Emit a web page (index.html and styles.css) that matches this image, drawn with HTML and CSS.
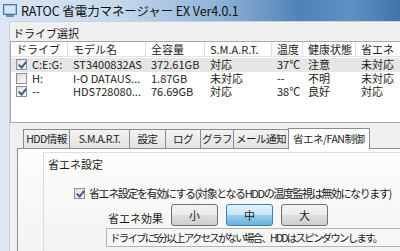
FILE: index.html
```html
<!DOCTYPE html>
<html lang="ja">
<head>
<meta charset="utf-8">
<link rel="stylesheet" href="styles.css">
</head>
<body>
<div class="titlebar">
  <svg class="appicon" width="14" height="13" viewBox="0 0 14 13">
    <rect x="0.5" y="0.5" width="13" height="10" fill="#9fc3e6" stroke="#4a78a8"/>
    <rect x="2" y="2" width="10" height="7" fill="#d6e8f8"/>
    <rect x="3" y="11" width="8" height="2" fill="#6d8fb3"/>
  </svg>
  <span class="title">RATOC 省電力マネージャー EX Ver4.0.1</span>
</div>
<div class="frame">
  <div class="client">
    <div class="section-label">ドライブ選択</div>
    <div class="listview">
      <div class="lv-row lv-head">
        <div class="c c1">ドライブ</div>
        <div class="c c2">モデル名</div>
        <div class="c c3">全容量</div>
        <div class="c c4">S.M.A.R.T.</div>
        <div class="c c5">温度</div>
        <div class="c c6">健康状態</div>
        <div class="c c7">省エネ</div>
      </div>
      <div class="lv-row sel">
        <div class="c c1"><span class="cb checked"></span>C:E:G:</div>
        <div class="c c2">ST3400832AS</div>
        <div class="c c3">372.61GB</div>
        <div class="c c4">対応</div>
        <div class="c c5">37℃</div>
        <div class="c c6">注意</div>
        <div class="c c7">未対応</div>
      </div>
      <div class="lv-row">
        <div class="c c1"><span class="cb"></span>H:</div>
        <div class="c c2">I-O DATAUS...</div>
        <div class="c c3">1.87GB</div>
        <div class="c c4">未対応</div>
        <div class="c c5">--</div>
        <div class="c c6">不明</div>
        <div class="c c7">未対応</div>
      </div>
      <div class="lv-row">
        <div class="c c1"><span class="cb checked"></span>--</div>
        <div class="c c2">HDS728080...</div>
        <div class="c c3">76.69GB</div>
        <div class="c c4">対応</div>
        <div class="c c5">38℃</div>
        <div class="c c6">良好</div>
        <div class="c c7">対応</div>
      </div>
    </div>
    <div class="tabs">
      <div class="tab t1">HDD情報</div>
      <div class="tab t2">S.M.A.R.T.</div>
      <div class="tab t3">設定</div>
      <div class="tab t4">ログ</div>
      <div class="tab t5">グラフ</div>
      <div class="tab t6">メール通知</div>
      <div class="tab active">省エネ/FAN制御</div>
    </div>
    <div class="panel">
      <div class="group">
        <div class="group-title">省エネ設定</div>
        <div class="check-line"><span class="cb checked"></span>省エネ設定を有効にする(対象となるHDDの温度監視は無効になります)</div>
        <div class="effect-row">
          <span class="effect-label">省エネ効果</span>
          <div class="btn">小</div>
          <div class="btn on">中</div>
          <div class="btn">大</div>
        </div>
        <div class="desc">ドライブに5分以上アクセスがない場合、HDDはスピンダウンします。</div>
      </div>
    </div>
  </div>
</div>
</body>
</html>
```

FILE: styles.css
```css
* { box-sizing: border-box; }
html, body {
  margin: 0;
  padding: 0;
}
body {
  width: 400px;
  height: 251px;
  overflow: hidden;
  background: #dfe8f2;
  font-family: "Noto Sans CJK JP", "DejaVu Sans", sans-serif;
  font-size: 11px;
  color: #1a1a1a;
}
.titlebar {
  height: 21px;
  display: flex;
  align-items: center;
  padding-left: 3px;
  gap: 4px;
  background: linear-gradient(90deg, #d8e6f4 0%, #c4d8ec 30%, #8fb2d6 55%, #4f82b8 75%, #5f91c4 88%, #3f73aa 100%);
}
.appicon { flex: none; }
.title {
  font-size: 12.5px;
  color: #111;
  white-space: nowrap;
  letter-spacing: -0.1px;
}
.frame {
  padding-left: 9px;
  height: 230px;
}
.client {
  height: 100%;
  background: #f0f0f0;
  border-left: 1px solid #c6d2de;
  border-top: 1px solid #c6d2de;
  display: flex;
  flex-direction: column;
}
.section-label {
  height: 19px;
  padding: 4px 0 0 3px;
  line-height: 14px;
}
.listview {
  background: #fff;
  border: 1px solid #a9a9a9;
  border-right: none;
  height: 82px;
  display: flex;
  flex-direction: column;
}
.lv-row {
  display: flex;
  height: 13.5px;
  line-height: 13px;
  white-space: nowrap;
  flex: none;
}
.lv-head {
  height: 15px;
  line-height: 15px;
  margin-bottom: 1px;
  border-bottom: 1px solid #e3e3e3;
  color: #222;
}
.lv-head .c { border-right: 1px solid #dedede; }
.lv-row.sel { background: #e6e6e6; }
.c { padding-left: 5px; flex: none; display: flex; align-items: center; }
.c1 { width: 57px; }
.c2 { width: 78px; }
.c3 { width: 59px; }
.c4 { width: 67px; }
.c5 { width: 31px; }
.c6 { width: 53px; }
.c7 { width: 44px; border-right: none !important; }
.cb {
  display: inline-block;
  width: 11px;
  height: 11px;
  border: 1px solid #8e8f8f;
  background: linear-gradient(135deg, #dcdcdc, #fbfbfb);
  margin-right: 5px;
  flex: none;
  position: relative;
}
.cb.checked::after {
  content: "";
  position: absolute;
  left: 3px;
  top: 0px;
  width: 3px;
  height: 6px;
  border-right: 2px solid #3b5f8e;
  border-bottom: 2px solid #3b5f8e;
  transform: rotate(40deg);
}
.tabs {
  display: flex;
  margin-top: 5px;
  margin-left: 13px;
  height: 20px;
  align-items: flex-end;
  font-size: 10.5px;
  letter-spacing: -0.5px;
}
.tab {
  height: 19px;
  line-height: 17px;
  text-align: center;
  border: 1px solid #898c95;
  border-bottom: none;
  margin-right: -1px;
  background: linear-gradient(#f2f2f2, #e3e3e3);
  white-space: nowrap;
  flex: none;
}
.t1 { width: 47px; }
.t2 { width: 61px; }
.t3 { width: 37px; }
.t4 { width: 36px; }
.t5 { width: 34px; }
.t6 { width: 56px; }
.tab.active {
  width: 82px;
  height: 21px;
  margin-bottom: -1px;
  text-align: left;
  padding-left: 4px;
  background: #fff;
  position: relative;
  z-index: 2;
  line-height: 20px;
}
.panel {
  flex: 1;
  margin-left: 7px;
  border: 1px solid #898c95;
  border-right: none;
  border-bottom: none;
  background: linear-gradient(#fdfdfd, #f3f3f3);
  padding: 3px 0 0 25px;
}
.group {
  height: 100%;
  border-left: 1px solid #dcdcdc;
  border-top: 1px solid #dcdcdc;
  padding: 4px 0 0 4px;
}
.group-title { line-height: 14px; }
.check-line {
  display: flex;
  align-items: center;
  margin: 15px 0 0 26px;
  white-space: nowrap;
  line-height: 14px;
  letter-spacing: -1.4px;
}
.check-line .cb { margin-right: 4px; }
.effect-row {
  display: flex;
  align-items: center;
  margin: 4px 0 0 60px;
  height: 22px;
}
.effect-label { width: 63px; padding-top: 5px; }
.btn {
  width: 47px;
  height: 22px;
  margin-right: 8px;
  border: 1px solid #707070;
  border-radius: 3px;
  background: linear-gradient(#f2f2f2 0%, #ebebeb 50%, #dddddd 51%, #cfcfcf 100%);
  text-align: center;
  line-height: 20px;
}
.btn.on {
  border-color: #3c7fb1;
  background: linear-gradient(#e5f4fc 0%, #c4e5f6 50%, #98d1ef 51%, #68b3db 100%);
}
.desc {
  margin: 2px 0 0 58px;
  height: 19px;
  border: 1px solid #b5b5b5;
  border-right: none;
  background: #f6f6f6;
  padding-left: 3px;
  line-height: 17px;
  white-space: nowrap;
  font-size: 10.5px;
  letter-spacing: -1.8px;
}
```
